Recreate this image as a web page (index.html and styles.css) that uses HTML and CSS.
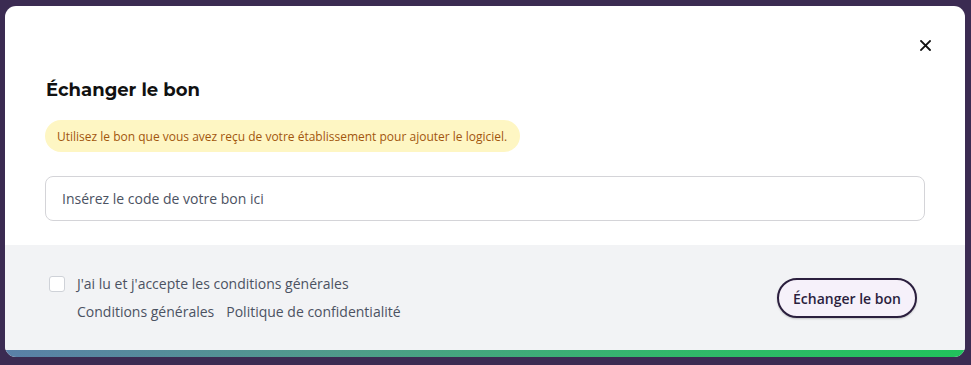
FILE: index.html
```html
<!DOCTYPE html>
<html lang="fr">
<head>
<meta charset="utf-8">
<link rel="stylesheet" href="styles.css">
</head>
<body>
<div class="backdrop">
  <div class="modal">
    <div class="body">
      <div class="close-row">
        <button class="close" aria-label="Fermer">
          <svg width="11" height="11" viewBox="0 0 11 11"><path d="M1 1L10 10M10 1L1 10" stroke="#111" stroke-width="1.8" stroke-linecap="square"/></svg>
        </button>
      </div>
      <h2 class="title">Échanger le bon</h2>
      <div class="alert">Utilisez le bon que vous avez reçu de votre établissement pour ajouter le logiciel.</div>
      <input class="code" type="text" placeholder="Insérez le code de votre bon ici">
    </div>
    <div class="footer">
      <div class="terms">
        <label class="check"><span class="box"></span><span>J'ai lu et j'accepte les conditions générales</span></label>
        <div class="links"><a>Conditions générales</a><a>Politique de confidentialité</a></div>
      </div>
      <button class="submit">Échanger le bon</button>
    </div>
    <div class="bar"></div>
  </div>
</div>
</body>
</html>
```

FILE: styles.css
```css
html, body { margin: 0; padding: 0; }
body {
  background: #3b2b52;
  font-family: "Open Sans", "Noto Sans", sans-serif;
  width: 971px;
  height: 365px;
  overflow: hidden;
}
.backdrop {
  padding: 6px 6px 0 5px;
}
.modal {
  background: #fff;
  border-radius: 11px;
  overflow: hidden;
  width: 960px;
}
.body {
  padding: 0 40px 24px 40px;
}
.close-row {
  display: flex;
  justify-content: flex-end;
  padding-top: 34px;
  margin-right: -6px;
  height: 15px;
}
.close {
  background: none;
  border: 0;
  padding: 0;
  width: 11px;
  height: 11px;
  display: flex;
}
.title {
  margin: 24px 0 0 1px;
  font-family: "Montserrat", "Lato", sans-serif;
  font-weight: 700;
  font-size: 18px;
  line-height: 22px;
  color: #111;
}
.alert {
  display: flex;
  align-items: center;
  width: fit-content;
  margin-top: 19px;
  background: #fef6c3;
  color: #a2560e;
  font-size: 12px;
  height: 32px;
  padding: 0 13px 0 12px;
  border-radius: 16px;
}
.code {
  display: block;
  box-sizing: border-box;
  margin: 24px 0 0 0;
  width: 880px;
  height: 45px;
  border: 1px solid #d4d4d8;
  border-radius: 8px;
  padding: 0 16px;
  font-family: "Open Sans", "Noto Sans", sans-serif;
  font-size: 14px;
  color: #333;
  outline: none;
}
.code::placeholder { color: #4b5262; }
.footer {
  background: #f2f3f5;
  height: 105px;
  box-sizing: border-box;
  padding: 0 48px 0 44px;
  display: flex;
  align-items: center;
  justify-content: space-between;
}
.terms { padding-top: 0; }
.check {
  display: flex;
  align-items: center;
  gap: 12px;
  font-size: 14px;
  color: #4b5262;
  line-height: 20px;
}
.box {
  width: 16px;
  height: 16px;
  box-sizing: border-box;
  border: 1px solid #cfd2d8;
  border-radius: 3px;
  background: #fff;
}
.links {
  margin: 8px 0 0 28px;
  display: flex;
  gap: 12px;
  font-size: 14px;
  line-height: 20px;
  color: #4b5262;
}
.submit {
  box-sizing: border-box;
  width: 140px;
  height: 40px;
  border: 2px solid #2b1f3e;
  border-radius: 20px;
  background: #f6f1fa;
  color: #2b1f3e;
  font-family: "Open Sans", "Noto Sans", sans-serif;
  font-weight: 600;
  font-size: 14px;
  padding: 0;
  margin-top: 1px;
  box-shadow: 0 1px 2px rgba(0,0,0,0.2);
}
.bar {
  height: 7px;
  background: linear-gradient(90deg, #5a80a8 0%, #4f9b8a 35%, #31b86a 70%, #21c25c 100%);
}
```
